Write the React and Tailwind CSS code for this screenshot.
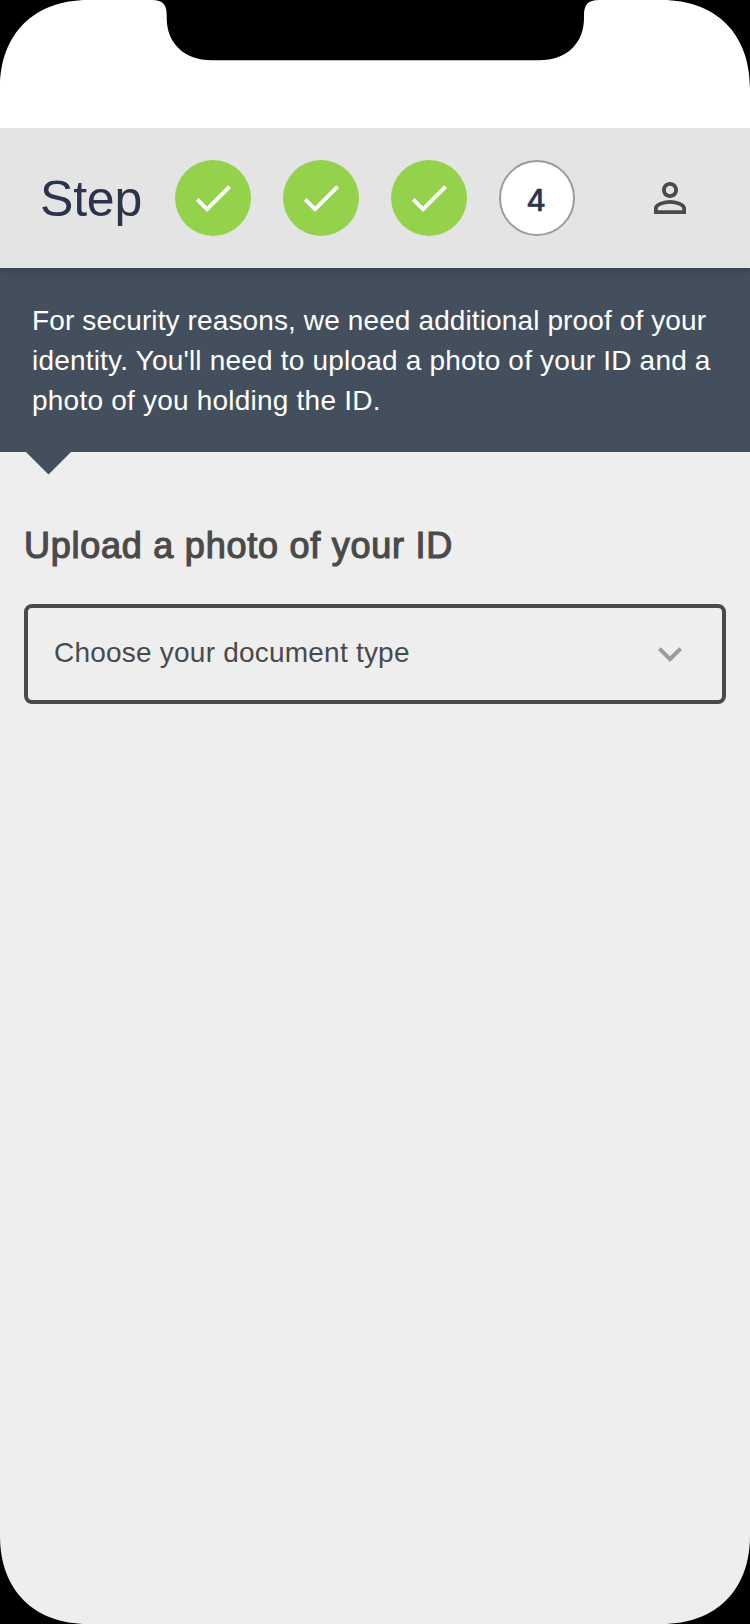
const STEPS = [
  { id: 1, done: true },
  { id: 2, done: true },
  { id: 3, done: true },
  { id: 4, done: false },
];

function CheckIcon() {
  return (
    <svg viewBox="0 0 24 24" className="size-12 fill-white" aria-hidden="true">
      <path d="M9 16.2 4.8 12l-1.4 1.4L9 19 21 7l-1.4-1.4z" />
    </svg>
  );
}

function PersonIcon() {
  return (
    <svg viewBox="0 0 24 24" className="size-12 fill-[#4a4a4a]" aria-hidden="true">
      <path d="M12 5.9c1.16 0 2.1.94 2.1 2.1s-.94 2.1-2.1 2.1S9.9 9.16 9.9 8s.94-2.1 2.1-2.1m0 9c2.97 0 6.1 1.46 6.1 2.1v1.1H5.9V17c0-.64 3.13-2.1 6.1-2.1M12 4C9.79 4 8 5.79 8 8s1.79 4 4 4 4-1.79 4-4-1.79-4-4-4zm0 9c-2.67 0-8 1.34-8 4v3h16v-3c0-2.66-5.33-4-8-4z" />
    </svg>
  );
}

function ChevronIcon() {
  return (
    <svg viewBox="0 0 24 24" className="size-12 fill-[#9b9b9b]" aria-hidden="true">
      <path d="M7.41 8.59 12 13.17l4.59-4.58L18 10l-6 6-6-6z" />
    </svg>
  );
}

function DeviceFrame() {
  return (
    <svg viewBox="0 0 750 1624" className="pointer-events-none absolute inset-0 z-30 h-[1624px] w-[750px]" aria-hidden="true">
      <path d="M0 0H88C34 0 0 34 0 88Z" />
      <path d="M750 0H662C716 0 750 34 750 88Z" />
      <path d="M0 1624H88C34 1624 0 1590 0 1536Z" />
      <path d="M750 1624H662C716 1624 750 1590 750 1536Z" />
      <path d="M152 0C163 0 166.7 5 166.7 15V18C166.7 43 184 60.3 212 60.3H539C567 60.3 584 43 584 18V15C584 5 588 0 599 0Z" />
    </svg>
  );
}

export default function App() {
  return (
    <div className="relative flex h-[1624px] w-[750px] flex-col overflow-hidden bg-[#eeeeee] font-['Liberation_Sans',Arial,sans-serif]">
      <div className="z-20 h-32 shrink-0 bg-white" />

      <header className="z-10 flex h-[140px] shrink-0 items-center bg-[#e4e4e4] pr-14 pl-10 shadow-[0_2px_8px_rgba(0,0,0,0.25)]">
        <h1 className="w-[135px] pt-0.5 text-[50px] leading-[56px] tracking-[-0.2px] text-[#2b344b]">Step</h1>
        <ol className="flex gap-8">
          {STEPS.map((step) =>
            step.done ? (
              <li key={step.id} className="flex size-19 items-center justify-center rounded-full bg-[#93d24a]">
                <CheckIcon />
              </li>
            ) : (
              <li
                key={step.id}
                className="flex size-19 items-center justify-center rounded-full border-2 border-[#9b9b9b] bg-white pt-1 pr-0.5 font-['Inter',sans-serif] text-[30px] font-medium text-[#2b344b] [-webkit-text-stroke:0.4px_#2b344b]"
              >
                {step.id}
              </li>
            ),
          )}
        </ol>
        <button type="button" className="ml-auto" aria-label="Account">
          <PersonIcon />
        </button>
      </header>

      <section className="relative h-[184px] shrink-0 bg-[#444f5d] px-8 pt-[33px] text-[28px] leading-10 whitespace-nowrap text-white">
        <p className="tracking-[0.12px]">For security reasons, we need additional proof of your</p>
        <p className="tracking-[0.19px]">identity. You'll need to upload a photo of your ID and a</p>
        <p className="tracking-[0.22px]">photo of you holding the ID.</p>
        <svg viewBox="0 0 45 23" className="absolute top-[184px] left-[25.5px] h-[23px] w-[45px] fill-[#444f5d]" aria-hidden="true">
          <path d="M0 0H45L22.5 22.5Z" />
        </svg>
      </section>

      <main className="flex flex-col px-6 pt-[70px]">
        <h2 className="text-[36px] leading-12 tracking-[0.75px] text-[#4a4a4a] [-webkit-text-stroke:1.2px_#4a4a4a]">
          Upload a photo of your ID
        </h2>
        <button
          type="button"
          className="mt-[34px] flex h-[100px] items-center justify-between rounded-lg border-4 border-[#4a4a4a] pr-7 pl-[26px] text-[28px] tracking-[0.22px] text-[#4a4a4a]"
        >
          <span className="pb-0.5">Choose your document type</span>
          <ChevronIcon />
        </button>
      </main>

      <DeviceFrame />
    </div>
  );
}
